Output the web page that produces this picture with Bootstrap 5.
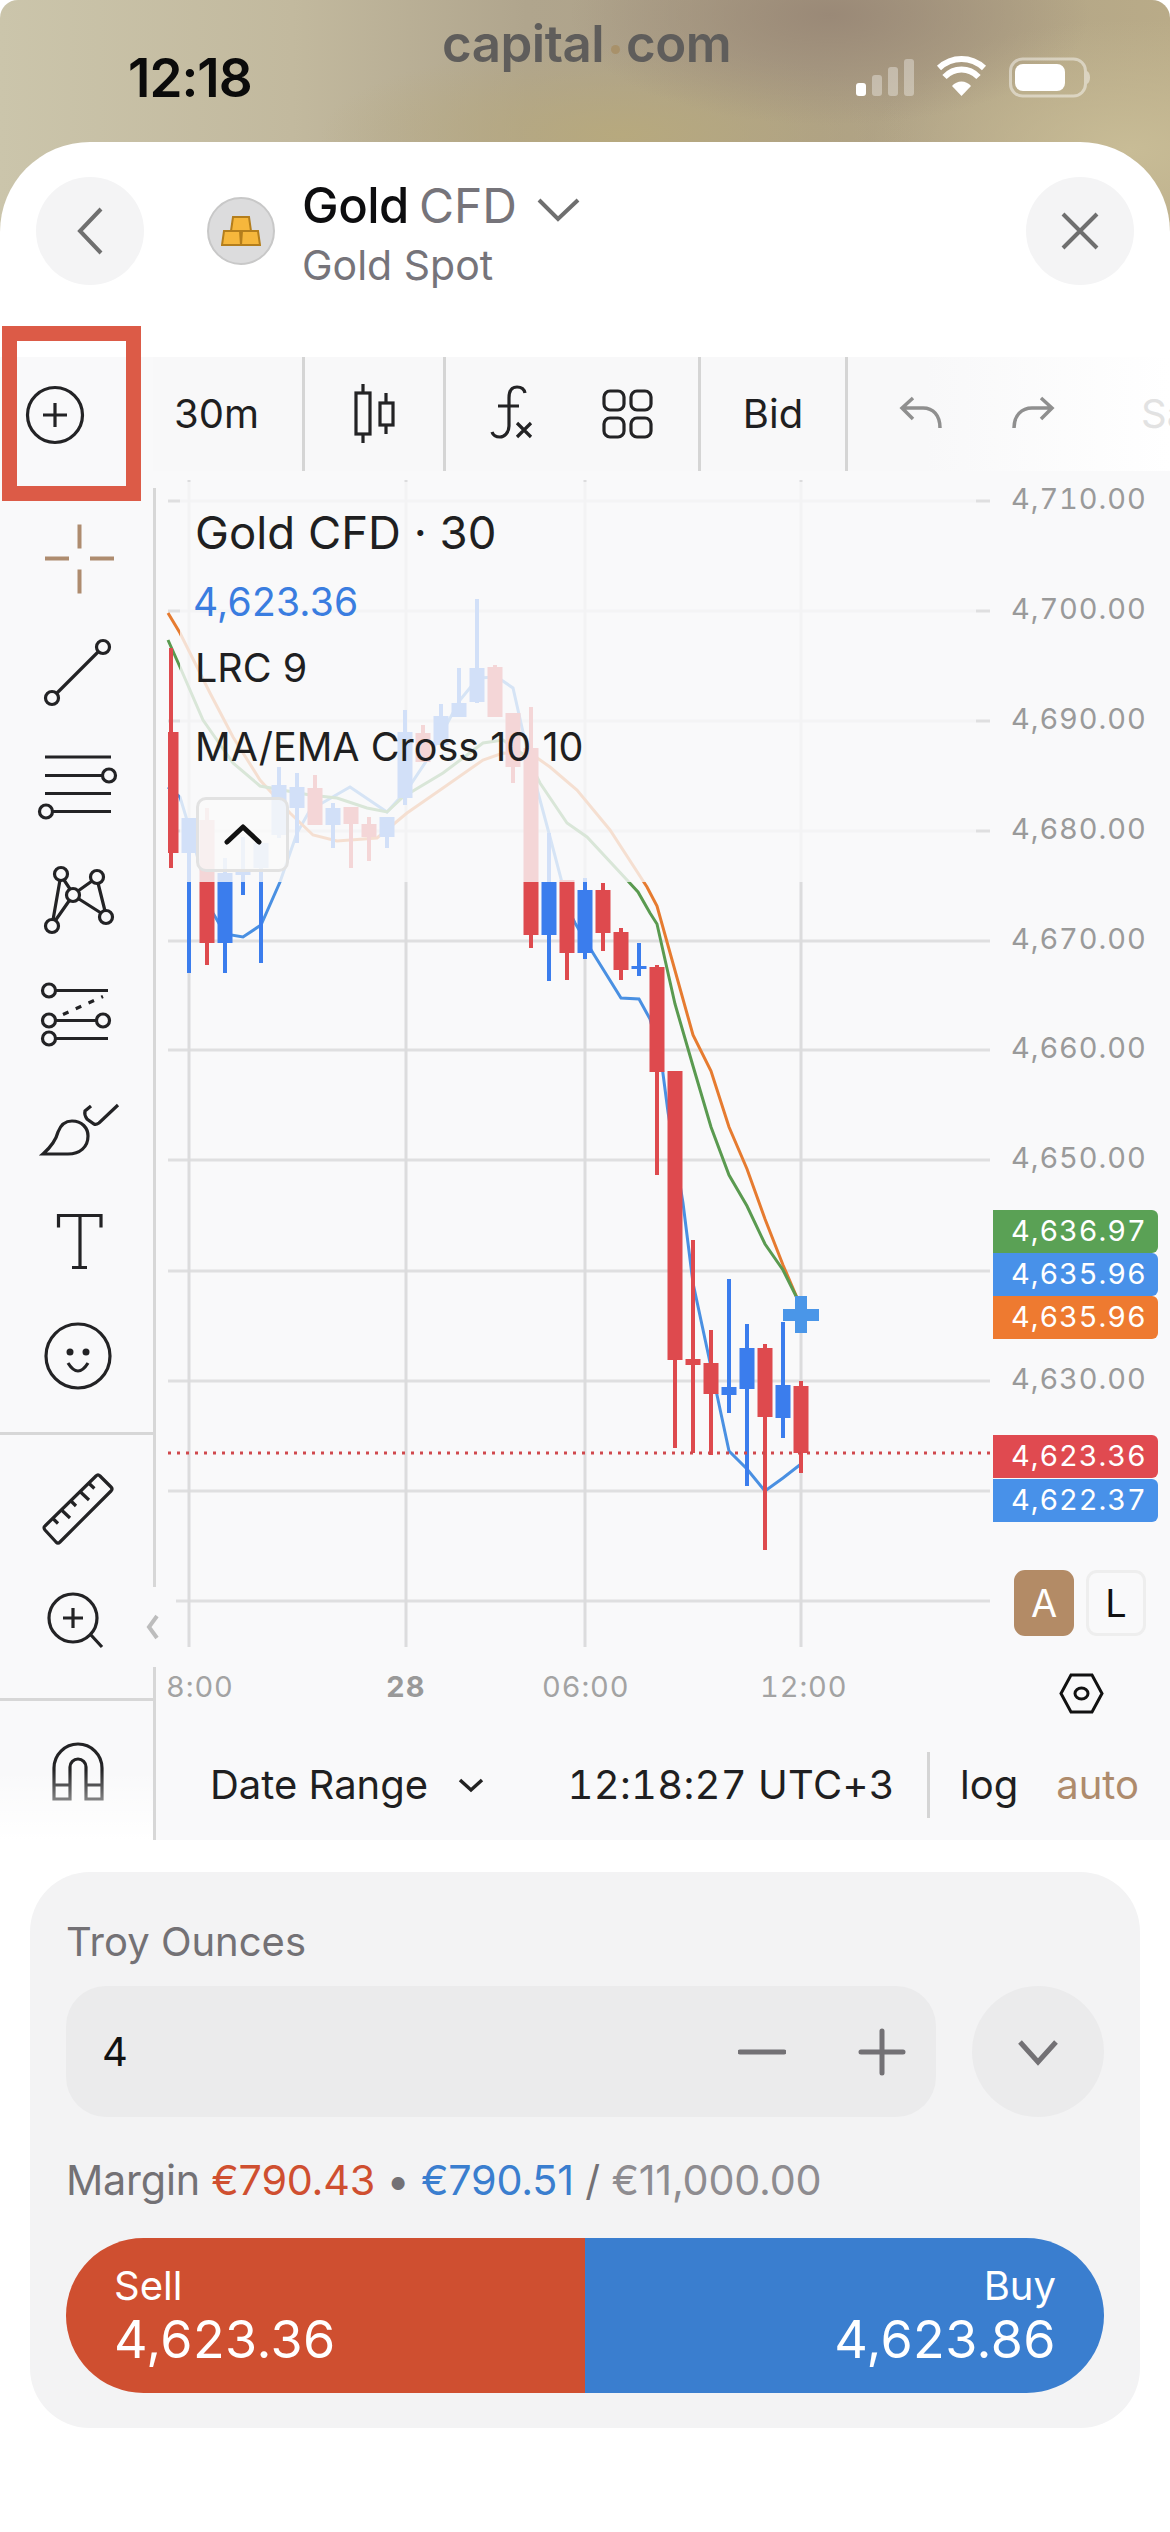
<!DOCTYPE html>
<html lang="en">
<head>
  <meta charset="UTF-8" />
  <title>Gold CFD – capital.com</title>
  <link rel="stylesheet" href="https://cdn.jsdelivr.net/npm/bootstrap@5.3.0/dist/css/bootstrap.min.css" />
  <style>
    body { background: #fff; font-family: Inter, "Liberation Sans", sans-serif; color: #1f1f21; margin: 0; }
    svg { display: block; flex: none; }
    .app {
      width: 1170px; height: 2532px; overflow: hidden; border-radius: 18px 18px 0 0;
      background-color: #fff;
      background-image:
        radial-gradient(260px 110px at 830px 15px, #9a8977 0%, rgba(154,137,119,0) 100%),
        radial-gradient(300px 90px at 620px 135px, #b7a97e 0%, rgba(183,169,126,0) 100%),
        radial-gradient(260px 130px at 1130px 150px, #c8bc96 0%, rgba(200,188,150,0) 100%),
        linear-gradient(90deg, #cbc5ab 0%, #c2b99e 25%, #b0a58d 45%, #ada086 70%, #b9ab88 100%);
      background-size: 100% 320px; background-repeat: no-repeat;
    }
    .status-row { height: 142px; padding: 48px 78px 0 128px; }
    .status-ico { margin-top: 7px; }
    .clock { font-size: 53px; line-height: 60px; font-weight: 600; color: #0b0b0b; letter-spacing: -1px; }
    .brand { top: 14px; left: 442px; font-size: 51px; line-height: 60px; font-weight: 600; color: #5f5d5b; letter-spacing: -.5px; }
    .brand i { display: inline-block; width: 9px; height: 9px; border-radius: 50%; background: #a8916a; margin: 0 6px 8px 7px; }
    .sheet { background: #fff; border-radius: 90px 90px 0 0; height: 2390px; }
    .head-row { height: 215px; padding: 35px 36px 0; }
    .round-btn { width: 108px; height: 108px; background: #f4f4f5; border: 0; padding: 0; }
    .asset-logo { width: 68px; height: 68px; background: #dcdcdd; border: 2px solid #c8c8c8; margin: 20px 27px 0 63px; }
    .asset-name { font-size: 49px; line-height: 56px; font-weight: 500; margin-top: 1px; color: #0d0d0f; letter-spacing: -.5px; }
    .asset-name span { color: #76747a; font-weight: 400; font-size: 48px; margin-left: 10px; letter-spacing: 0; }
    .asset-chev { margin: 17px 0 0 20px; }
    .asset-sub { font-size: 41px; line-height: 50px; color: #76747a; margin-top: 6px; }
    .workspace { height: 1483px; }
    .tool-col { width: 153px; flex: none; background: #f9f9fa; }
    .tool-col::after { content: ""; position: absolute; left: 0; right: 0; bottom: 0; height: 70px; background: linear-gradient(rgba(255,255,255,0), #fff); }
    .tool-slot { height: 113.5px; }
    .tool-gap { height: 31px; }
    .tool-rule { height: 3px; background: #d7d7d7; }
    .tool-rule-a { margin-top: 22px; }
    .tool-rule-b { margin-top: 26px; }
    .tool-after-rule { margin-top: 21px; }
    .tool-ico { fill: none; stroke: #232325; stroke-width: 3.2; }
    .tool-ico .dot-fill { fill: #232325; stroke: none; }
    .annot-box { left: 2px; top: 326px; width: 139px; height: 175px; border: 15px solid #dc5b47; z-index: 5; }
    .main-col { width: 1017px; flex: none; }
    .top-bar { height: 114px; font-size: 40px; overflow: hidden; white-space: nowrap; background: linear-gradient(90deg, #f8f8f9 0%, #f8f8f9 76%, #fff 100%); }
    .top-cell { height: 114px; border-right: 3px solid #d5d5d5; flex: none; }
    .cell-res { width: 152px; padding-left: 21px; }
    .cell-type { width: 141px; }
    .cell-study { width: 255px; padding-left: 38px; gap: 53px; }
    .cell-side { width: 147px; }
    .redo-ico { margin-left: 62px; }
    .save-hint { color: #e2e2e2; margin-left: 83px; }
    .chart-body { border-left: 3px solid #d7d7d7; background: #f9f9fa; height: 1369px; }
    .chart-body::before { content: ""; position: absolute; left: -3px; top: 0; width: 3px; height: 17px; background: #f9f9fa; }
    .legend { left: 39px; top: 32px; font-size: 39.5px; line-height: 60px; }
    .legend-title { font-size: 45.500px; }
    .legend-price { color: #3a7de0; margin: 9px 0 6px -2px; letter-spacing: .2px; font-size: 39px; }
    .legend-cross { margin-top: 19px; }
    .fold-btn { left: 40px; top: 326px; width: 93px; height: 75px; border: 3px solid #e2e2e2; border-radius: 10px; background: rgba(249,249,250,.72); }
    .side-handle { left: -10px; top: 1116px; width: 30px; height: 80px; background: #f9f9fa; z-index: 2; }
    .scale-btn { top: 1099px; width: 60px; height: 66px; border-radius: 11px; font-size: 38px; }
    .scale-a { right: 96px; background: #b38b66; color: #fff; }
    .scale-l { right: 24px; border: 3px solid #eee; color: #111; }
    .range-bar { height: 110px; font-size: 40px; padding: 0 31px 0 54px; }
    .range-chev { margin-left: 30px; }
    .clock-utc { margin-left: auto; padding-right: 32px; border-right: 3px solid #d5d5d5; height: 66px; line-height: 66px; letter-spacing: .3px; font-variant-numeric: tabular-nums; }
    .log-txt { margin-left: 30px; }
    .auto-txt { color: #ae8b6c; margin-left: 38px; }
    .trade-card { margin: 32px 30px 0; height: 556px; padding: 47px 36px 0; background: #f3f3f4; border-radius: 60px; }
    .qty-label { font-size: 40px; line-height: 46px; color: #737175; margin-bottom: 21px; }
    .qty-field { width: 870px; height: 131px; background: #ebebec; border-radius: 40px; padding: 0 30px 0 36px; font-size: 40px; color: #111; }
    .plus-ico { margin-left: 72px; }
    .qty-more { width: 132px; height: 131px; background: #ebebec; }
    .margin-line { font-size: 41.3px; line-height: 50px; margin-top: 38px; color: #737175; letter-spacing: -.2px; white-space: nowrap; }
    .txt-sell { color: #cf4f30; }
    .txt-buy { color: #3a7ecf; }
    .txt-limit { color: #8e8c90; }
    .order-row { margin-top: 33px; height: 155px; border-radius: 78px; overflow: hidden; color: #fff; }
    .order-side { width: 50%; padding: 23px 48px; }
    .side-sell { background: #cf4f30; }
    .side-buy { background: #3a7ecf; }
    .side-name { font-size: 40px; line-height: 50px; }
    .side-price { font-size: 52px; line-height: 58px; letter-spacing: .4px; }
    .axis-txt { font-family: Inter, "Liberation Sans", sans-serif; font-size: 29px; letter-spacing: .9px; font-variant-numeric: tabular-nums; }
  </style>
</head>
<body>
  <div class="app position-relative">
    <div class="annot-box position-absolute"></div>

    <div class="status-row d-flex justify-content-between align-items-start position-relative">
      <div class="clock">12:18</div>
      <div class="brand position-absolute">capital<i></i>com</div>
      <svg class="status-ico" width="236" height="50" viewBox="856 55 236 50">
        <rect x="856" y="83" width="10" height="13" rx="3" fill="#fff"/>
        <rect x="872" y="75" width="10" height="21" rx="3" fill="#fff" opacity=".35"/>
        <rect x="888" y="67" width="10" height="29" rx="3" fill="#fff" opacity=".35"/>
        <rect x="904" y="59" width="10" height="37" rx="3" fill="#fff" opacity=".35"/>
        <path d="M961.500 96 L952 86 C957 80 966 80 971 86 Z" fill="#fff"/>
        <path d="M944.500 77 C954 67 969 67 978.500 77" fill="none" stroke="#fff" stroke-width="6"/>
        <path d="M939 68 C952 56 971 56 984 68" fill="none" stroke="#fff" stroke-width="6"/>
        <rect x="1010.500" y="59" width="75" height="37" rx="12" fill="none" stroke="#fff" stroke-opacity=".45" stroke-width="3"/>
        <rect x="1015" y="64" width="50" height="27" rx="8" fill="#fff"/>
        <path d="M1087 71 C1091 73 1091 82 1087 84 Z" fill="#fff" fill-opacity=".45"/>
      </svg>
    </div>

    <div class="sheet">
      <div class="head-row d-flex align-items-start">
        <button class="btn round-btn rounded-circle d-flex align-items-center justify-content-center" type="button" aria-label="Back">
          <svg width="40" height="60" viewBox="68 201 40 60"><path d="M99 209 L78 231 L99 253" fill="none" stroke="#6f6f6f" stroke-width="4"/></svg>
        </button>
        <div class="asset-logo rounded-circle d-flex align-items-center justify-content-center">
          <svg width="40" height="32" viewBox="0 0 40 32">
            <path d="M12 2 H28 L30 16 H10 Z" fill="#f6b73c" stroke="#b47e1c" stroke-width="2"/>
            <path d="M3 16 H19 L20 30 H1 Z" fill="#f6b73c" stroke="#b47e1c" stroke-width="2"/>
            <path d="M21 16 H37 L39 30 H20 Z" fill="#f6b73c" stroke="#b47e1c" stroke-width="2"/>
          </svg>
        </div>
        <div>
          <div class="asset-name d-flex align-items-baseline">Gold <span>CFD</span>
            <svg class="asset-chev align-self-start" width="44" height="30" viewBox="540 190 44 30"><path d="M542 195 L561 214 L581 195" fill="none" stroke="#6f6f6f" stroke-width="4"/></svg>
          </div>
          <div class="asset-sub">Gold Spot</div>
        </div>
        <button class="btn round-btn rounded-circle d-flex align-items-center justify-content-center ms-auto" type="button" aria-label="Close">
          <svg width="44" height="44" viewBox="1058 209 44 44"><path d="M1063 214 L1097 248 M1097 214 L1063 248" fill="none" stroke="#6f6f6f" stroke-width="4"/></svg>
        </button>
      </div>

      <div class="workspace d-flex">
        <div class="tool-col position-relative d-flex flex-column align-items-center overflow-hidden">
          <svg class="tool-ico" width="110" height="114" viewBox="22 357 110 114">
            <circle cx="55" cy="415" r="27.500"/><path d="M43 415 H67 M55 403 V427"/>
          </svg>
          <div class="tool-gap"></div>
          <div class="tool-slot"><svg width="110" height="113" viewBox="22 502.500 110 113"><path d="M45 559 H69 M90 559 H114 M79.500 525 V549 M79.500 570 V594" fill="none" stroke="#ae8c6f" stroke-width="4"/></svg></div>
          <div class="tool-slot"><svg class="tool-ico" width="110" height="113" viewBox="22 616 110 113"><circle cx="103" cy="647" r="6.500"/><circle cx="52" cy="698" r="6.500"/><path d="M98 652 L57 693"/></svg></div>
          <div class="tool-slot"><svg class="tool-ico" width="110" height="113" viewBox="22 729.500 110 113"><path d="M45 757.500 H111 M45 776 H103 M45 794 H111 M52 812 H111"/><circle cx="109" cy="776" r="6.500"/><circle cx="46" cy="812" r="6.500"/></svg></div>
          <div class="tool-slot"><svg class="tool-ico" width="110" height="113" viewBox="22 843 110 113"><circle cx="61" cy="874" r="6.500"/><circle cx="97" cy="877" r="6.500"/><circle cx="73" cy="895" r="6.500"/><circle cx="52" cy="926" r="6.500"/><circle cx="106" cy="917" r="6.500"/><path d="M60 880 L53 920 M64 880 L70 889 M55 921 L69 901 M78 891 L92 881 M98 883 L105 911 M79 899 L101 913"/></svg></div>
          <div class="tool-slot"><svg class="tool-ico" width="110" height="113" viewBox="22 956.500 110 113"><circle cx="49" cy="991" r="6.500"/><circle cx="49" cy="1021" r="6.500"/><circle cx="49" cy="1039" r="6.500"/><circle cx="103" cy="1021" r="6.500"/><path d="M56 991 H108 M56 1021 H97 M56 1039 H108"/><path d="M63 1015 L103 997" stroke-dasharray="6 8"/></svg></div>
          <div class="tool-slot"><svg class="tool-ico" width="110" height="113" viewBox="22 1070 110 113"><path d="M43 1154 C52 1146 56 1140 58 1132 C61 1124 66 1121 72 1121 C82 1121 88 1128 88 1136 C88 1147 80 1154 68 1154 Z"/><path d="M91 1106 L85 1111 Q84 1115 87 1119 L94 1124 Q96 1125 99 1123 L118 1105"/></svg></div>
          <div class="tool-slot"><svg class="tool-ico" width="110" height="113" viewBox="22 1183.500 110 113"><path d="M58.500 1228 V1216 H101 V1228 M80 1216 V1268 M72 1268 H87"/></svg></div>
          <div class="tool-slot"><svg class="tool-ico" width="110" height="113" viewBox="22 1297 110 113"><circle cx="78" cy="1356" r="32"/><circle cx="70" cy="1352" r="3.500" class="dot-fill"/><circle cx="86" cy="1352" r="3.500" class="dot-fill"/><path d="M68 1363 Q78 1379 88 1363"/></svg></div>
          <div class="tool-rule tool-rule-a w-100 flex-shrink-0"></div>
          <svg class="tool-ico tool-after-rule flex-shrink-0" width="110" height="108" viewBox="22 1456 110 108">
            <path d="M96 1476 Q98 1474 100 1476 L111 1487 Q113 1489 111 1491 L60 1542 Q58 1544 56 1542 L45 1530 Q43 1527.500 45 1526 Z"/>
            <path d="M52.400 1518 L58 1523.500 M61 1509.500 L70 1518 M70.500 1500.500 L76 1506 M80 1491.500 L89 1500 M88.600 1483 L94.400 1488.500"/>
          </svg>
          <svg class="tool-ico flex-shrink-0" width="110" height="108" viewBox="22 1564 110 108">
            <circle cx="73" cy="1618" r="24"/><path d="M63 1618 H83 M73 1608 V1628 M91 1635 L102 1647"/>
          </svg>
          <div class="tool-rule tool-rule-b w-100 flex-shrink-0"></div>
          <svg class="tool-ico flex-shrink-0 mt-3" width="110" height="110" viewBox="22 1720 110 110">
            <path d="M54 1802 V1771 A24 24 0 0 1 102 1771 V1802 H86 V1770 A8 8 0 0 0 70 1770 V1802 Z M54 1788 H70 M86 1788 H102"/>
          </svg>
        </div>

        <div class="main-col">
          <div class="top-bar d-flex align-items-center">
            <div class="top-cell cell-res d-flex align-items-center">30m</div>
            <div class="top-cell cell-type d-flex align-items-center justify-content-center">
              <svg class="tool-ico" width="60" height="70" viewBox="343 379 60 70"><path d="M362 384 V393 M362 434 V443 M385 393 V403 M385 425 V434"/><rect x="355" y="393" width="14" height="41"/><rect x="379" y="403" width="13" height="22"/></svg>
            </div>
            <div class="top-cell cell-study d-flex align-items-center">
              <svg class="tool-ico" width="60" height="70" viewBox="484 379 60 70"><path d="M525 393 C524 388 520 387 517 387 C511 387 509 392 509 398 V426 C509 433 504 437 500 437 C496 437 493 435 492 432 M498 406 H519 M517 423 L531 437 M531 423 L517 437"/></svg>
              <svg class="tool-ico" width="60" height="60" viewBox="597 384 60 60"><rect x="604" y="391" width="20" height="19" rx="6"/><rect x="631" y="391" width="20" height="19" rx="6"/><rect x="604" y="418" width="20" height="19" rx="6"/><rect x="631" y="418" width="20" height="19" rx="6"/></svg>
            </div>
            <div class="top-cell cell-side d-flex align-items-center justify-content-center">Bid</div>
            <svg class="ms-5" width="50" height="50" viewBox="888 390 50 50"><path d="M905 399 L894 409 L905 420 M894 409 H915 C925 409 932 416 932 429" fill="none" stroke="#8f8f8f" stroke-width="3.500"/></svg>
            <svg class="redo-ico" width="50" height="50" viewBox="1000 390 50 50"><path d="M1033 399 L1044 409 L1033 420 M1044 409 H1024 C1014 409 1006 416 1006 429" fill="none" stroke="#8f8f8f" stroke-width="3.500"/></svg>
            <span class="save-hint">Save</span>
          </div>

          <div class="chart-body position-relative">
            <svg id="chart" width="1014" height="1259" viewBox="156 471 1014 1259"></svg>

            <div class="legend position-absolute">
              <div class="legend-title">Gold CFD · 30</div>
              <div class="legend-price">4,623.36</div>
              <div>LRC 9</div>
              <div class="legend-cross">MA/EMA Cross 10 10</div>
            </div>
            <div class="fold-btn position-absolute d-flex align-items-center justify-content-center">
              <svg width="44" height="26" viewBox="0 0 44 26"><path d="M6 20 L22 5 L38 20" fill="none" stroke="#111" stroke-width="5" stroke-linecap="round" stroke-linejoin="round"/></svg>
            </div>
            <div class="side-handle position-absolute d-flex align-items-center">
              <svg width="14" height="26" viewBox="0 0 14 26"><path d="M11 2 L3 13 L11 24" fill="none" stroke="#bdbdbd" stroke-width="4"/></svg>
            </div>
            <div class="scale-btn scale-a position-absolute d-flex align-items-center justify-content-center">A</div>
            <div class="scale-btn scale-l position-absolute d-flex align-items-center justify-content-center">L</div>

            <div class="range-bar d-flex align-items-center">
              <span>Date Range</span>
              <svg class="range-chev" width="26" height="16" viewBox="0 0 26 16"><path d="M2 3 L13 13 L24 3" fill="none" stroke="#222" stroke-width="3.500"/></svg>
              <span class="clock-utc">12:18:27 UTC+3</span>
              <span class="log-txt">log</span>
              <span class="auto-txt">auto</span>
            </div>
          </div>
        </div>
      </div>

      <div class="trade-card">
        <div class="qty-label">Troy Ounces</div>
        <div class="d-flex justify-content-between">
          <div class="qty-field d-flex align-items-center">
            <span>4</span>
            <svg class="ms-auto" width="48" height="8" viewBox="0 0 48 8"><path d="M2 4 H46" stroke="#737175" stroke-width="5" stroke-linecap="round"/></svg>
            <svg class="plus-ico" width="48" height="48" viewBox="0 0 48 48"><path d="M3 24 H45 M24 3 V45" stroke="#737175" stroke-width="5" stroke-linecap="round"/></svg>
          </div>
          <div class="qty-more rounded-circle d-flex align-items-center justify-content-center">
            <svg width="44" height="30" viewBox="0 0 44 30"><path d="M4 5 L22 25 L40 5" fill="none" stroke="#737175" stroke-width="5"/></svg>
          </div>
        </div>
        <div class="margin-line">Margin <span class="txt-sell">€790.43</span> • <span class="txt-buy">€790.51</span> / <span class="txt-limit">€11,000.00</span></div>
        <div class="order-row d-flex">
          <div class="order-side side-sell">
            <div class="side-name">Sell</div>
            <div class="side-price">4,623.36</div>
          </div>
          <div class="order-side side-buy text-end">
            <div class="side-name">Buy</div>
            <div class="side-price">4,623.86</div>
          </div>
        </div>
      </div>
    </div>
  </div>

  <script>
    const RED = '#de4a4e', BLUE = '#3b7ded';
    const gridY = [501, 611, 721, 831, 941, 1050, 1160, 1271, 1381, 1491, 1601];
    const gridX = [189, 406, 585, 801];
    const prices = [[501,'4,710.00'],[611,'4,700.00'],[721,'4,690.00'],[831,'4,680.00'],[941,'4,670.00'],[1050,'4,660.00'],[1160,'4,650.00'],[1381,'4,630.00']];
    const tags = [[1210,'#5aa155','4,636.97'],[1253,'#4891e9','4,635.96'],[1296,'#ee7a30','4,635.96'],[1435,'#e04a50','4,623.36'],[1479,'#4891e9','4,622.37']];
    const times = [[166,'8:00',400],[386,'28',700],[542,'06:00',400],[760,'12:00',400]];

    // x, up?, high, bodyTop, bodyBottom, low
    const candles = [
      [171,0,648,732,853,868],[189,1,818,818,853,973],[207,0,808,820,943,965],[225,1,858,873,943,973],
      [243,1,837,872,875,895],[261,1,843,843,868,963],[279,1,767,785,835,838],[297,1,773,787,808,843],
      [315,0,775,788,825,825],[333,1,803,808,825,848],[351,0,807,807,824,868],[369,0,817,824,837,861],
      [387,1,817,817,837,848],[405,1,710,732,798,805],[423,0,725,733,762,762],[441,1,704,716,745,745],
      [459,1,668,703,717,717],[477,1,599,668,702,703],[495,0,665,667,717,717],[513,0,713,713,767,783],
      [531,0,707,748,935,948],[549,1,833,882,935,981],[567,0,880,880,953,980],[585,1,878,890,953,959],
      [603,0,883,890,933,951],[621,0,928,932,970,980],[639,1,943,966,969,976],[657,0,965,967,1072,1175],
      [675,0,1071,1071,1360,1448],[693,0,1240,1359,1365,1453],[711,0,1330,1363,1394,1455],[729,1,1279,1387,1395,1413],
      [747,1,1324,1348,1389,1486],[765,0,1344,1348,1417,1550],[783,1,1322,1385,1418,1438],[801,0,1381,1386,1453,1473]
    ];
    const orange = '168,613 180,633 210,693 233,737 260,780 290,813 313,835 337,841 377,838 407,813 443,788 483,760 503,753 533,755 550,767 577,790 610,830 647,887 657,906 693,1035 711,1071 729,1127 747,1169 765,1219 783,1265 798,1300';
    const green = '168,640 180,667 203,720 233,763 260,786 310,795 337,798 367,808 387,812 403,797 443,773 483,743 503,740 527,757 540,783 567,823 587,837 627,880 638,892 650,913 657,924 675,1004 693,1066 711,1127 729,1175 747,1206 765,1244 783,1270 798,1300';
    const lrc = '168,787 180,797 190,830 213,913 225,934 243,937 261,925 280,882 297,833 310,810 350,787 387,812 407,790 427,760 460,700 478,678 497,677 513,688 530,763 550,837 570,913 575,923 593,953 621,998 639,999 650,1019 662,1066 668,1112 683,1203 693,1283 711,1367 729,1451 747,1469 765,1491 783,1478 801,1464';

    let out = '';
    for (const y of gridY) out += `<path d="M168 ${y} H990" stroke="#dfdfe0" stroke-width="3"/>`;
    for (const x of gridX) out += `<path d="M${x} 480 V1647" stroke="#dcdcdd" stroke-width="3"/>`;
    out += `<polyline points="${lrc}" fill="none" stroke="#4a90e2" stroke-width="3"/>`;
    out += `<polyline points="${orange}" fill="none" stroke="#e67b30" stroke-width="3"/>`;
    out += `<polyline points="${green}" fill="none" stroke="#5a9a50" stroke-width="3"/>`;
    for (const [x, up, hi, top, bot, lo] of candles) {
      const c = up ? BLUE : RED;
      out += `<path d="M${x} ${hi} V${lo}" stroke="${c}" stroke-width="4"/>`;
      const left = Math.max(x - 7.5, 168), w = x + 7.5 - left;
      out += `<rect x="${left}" y="${top}" width="${w}" height="${bot - top}" fill="${c}"/>`;
    }
    out += '<path d="M168 1453 H990" stroke="#d0484c" stroke-width="3" stroke-dasharray="3 6"/>';
    out += '<path d="M783 1315 H819 M801 1296 V1333" stroke="#4a96e8" stroke-width="12" fill="none"/>';
    // legend area washes out whatever is drawn under it
    out += '<rect x="180" y="482" width="796" height="400" fill="#f9f9fa" fill-opacity=".8"/>';
    for (const [y, s] of prices) out += `<text x="1011" y="${y + 8}" fill="#9a9a9a" class="axis-txt">${s}</text>`;
    for (const [y, col, s] of tags) {
      out += `<path d="M993 ${y} H1152 a6 6 0 0 1 6 6 V${y + 37} a6 6 0 0 1 -6 6 H993 Z" fill="${col}"/>`;
      out += `<text x="1011" y="${y + 31}" fill="#fff" class="axis-txt">${s}</text>`;
    }
    for (const [x, s, w] of times) out += `<text x="${x}" y="1697" fill="${w > 400 ? '#999' : '#a3a3a3'}" font-weight="${w}" class="axis-txt">${s}</text>`;
    out += '<path d="M1071 1675 H1092 L1102 1693.500 L1092 1712 H1071 L1061 1693.500 Z" fill="none" stroke="#111" stroke-width="3"/><ellipse cx="1081.500" cy="1693.500" rx="6.500" ry="5.500" fill="none" stroke="#111" stroke-width="3"/>';
    document.getElementById('chart').innerHTML = out;
  </script>
  <script src="https://cdn.jsdelivr.net/npm/bootstrap@5.3.0/dist/js/bootstrap.bundle.min.js"></script>
</body>
</html>
